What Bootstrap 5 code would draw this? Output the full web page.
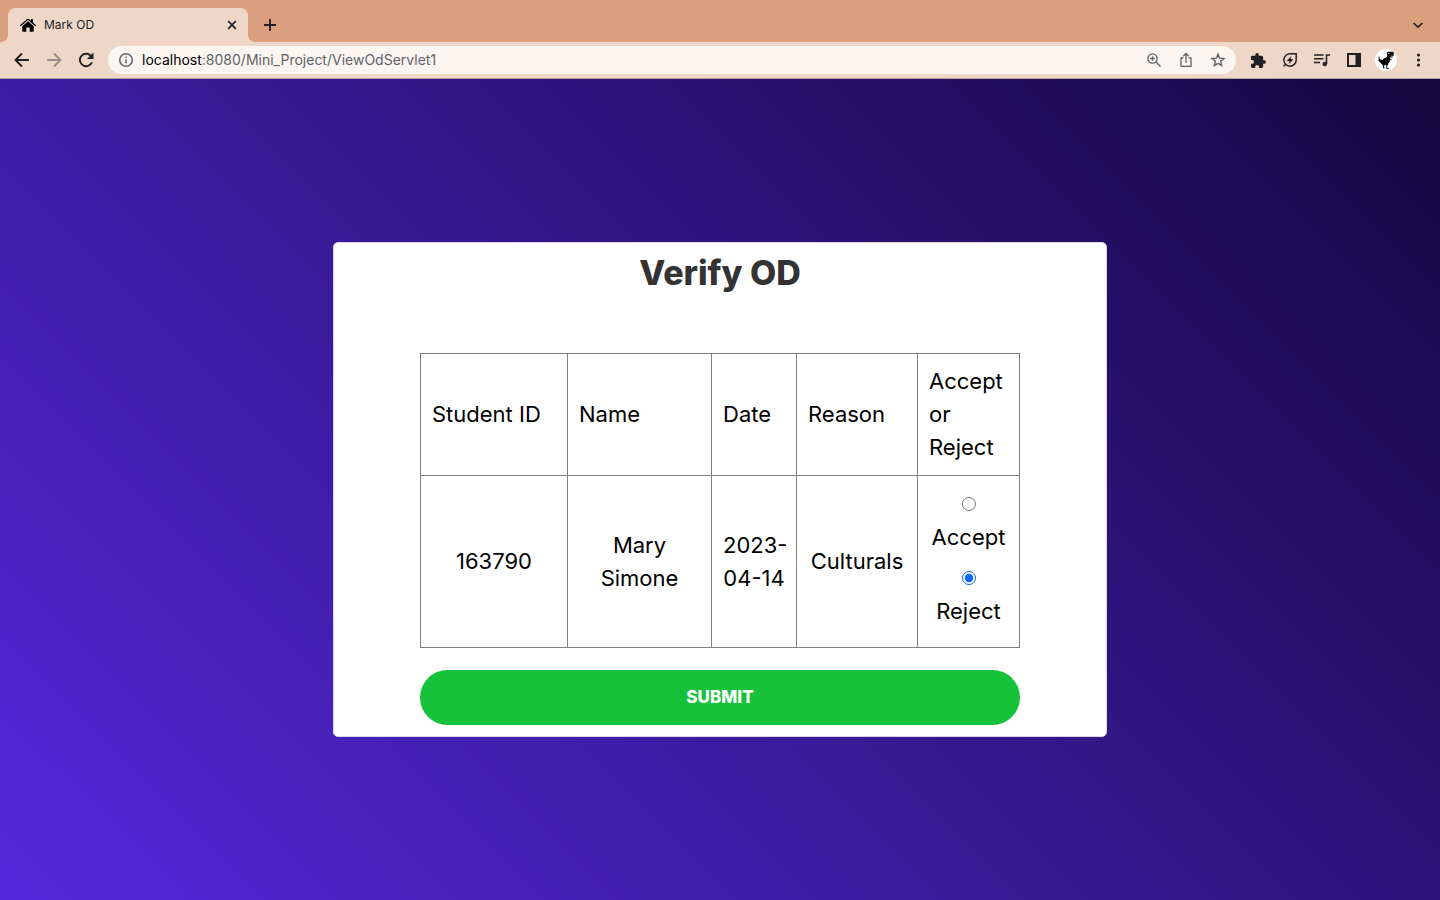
<!DOCTYPE html>
<html lang="en">
<head>
<meta charset="utf-8">
<meta name="viewport" content="width=device-width, initial-scale=1">
<title>Mark OD</title>
<link href="https://cdn.jsdelivr.net/npm/bootstrap@5.3.0/dist/css/bootstrap.min.css" rel="stylesheet">
<style>
  body { font-family: Inter, sans-serif; color: #000; }
  button.plain { border: 0; background: none; padding: 0; color: #202124; display: flex; align-items: center; justify-content: center; }
  svg { display: block; flex: none; }

  /* Browser frame */
  .tabstrip { background: #daa07d; height: 42px; padding: 8px 12px 0 8px; }
  .page-tab { position: relative; width: 240px; height: 34px; padding: 0 10px 0 12px; background: #efd7c8; border-radius: 8px 8px 0 0; font-size: 12px; color: #202124; }
  .page-tab::before, .page-tab::after { content: ""; position: absolute; bottom: 0; width: 8px; height: 8px; }
  .page-tab::before { left: -8px; background: radial-gradient(circle at 0 0, transparent 8px, #efd7c8 8px); }
  .page-tab::after { right: -8px; background: radial-gradient(circle at 100% 0, transparent 8px, #efd7c8 8px); }
  .toolbar { background: #efd7c8; height: 37px; padding: 4px 14px; border-bottom: 1px solid #b39f9b; gap: 16px; }
  .toolbar > .plain { width: 16px; }
  .omnibox { height: 28px; background: #fcf6f3; border-radius: 14px; padding: 0 10px; margin: 0 -2px; color: #5f6368; }
  .address { font-size: 14px; line-height: 20px; color: #5f6368; padding-bottom: 1px; }

  /* Page */
  .stage { background: linear-gradient(45deg, #5628dd, #13073f); }
  .panel { width: 54%; min-width: 640px; max-width: 774px; background: #fff; border: 1px solid #d9d5e4; border-radius: 5px; padding: 4px 24px 11px; }
  .panel-title { font-size: 34px; line-height: 52px; font-weight: 800; color: #333; margin-bottom: 54px; }
  .panel-form { max-width: 600px; }
  .od-table { table-layout: fixed; border-collapse: collapse; width: 100%; font-size: 22px; line-height: 33px; margin-bottom: 22px; }
  .od-table th, .od-table td { border: 1px solid #808080; padding: 11px; vertical-align: middle; font-weight: 400; }
  .od-table td { text-align: center; }
  .od-table th { height: 122px; }
  .od-table tbody tr { height: 172px; }
  .w-id { width: 147px; } .w-name { width: 144px; } .w-date { width: 85px; } .w-reason { width: 121px; }
  .choice { display: flex; flex-direction: column; align-items: center; margin-bottom: 8px; }
  .choice input { width: 14px; height: 14px; margin: 9px 0 10px; accent-color: #0668fe; }
  .submit-btn { height: 55px; border: 0; border-radius: 28px; background: #15c23a; color: #fff; font-size: 17px; font-weight: 800; }
</style>
</head>
<body>
<div class="min-vh-100 d-flex flex-column">
  <header>
    <div class="tabstrip d-flex align-items-center">
      <div class="page-tab d-flex align-items-center">
        <svg width="16" height="14" viewBox="0 0 16 14"><path d="M0 7.3 7.1 1Q8 .3 8.900 1L11 2.800V1h2v3.600l3 2.700-.8.9L8 2 .8 8.200z"/><path d="M2.300 8.200 8 3.300l5.700 4.900V13q0 .8-.8.8H9.700V9.500H6.300v4.300H3.100q-.8 0-.8-.8z"/></svg>
        <span class="ms-2 flex-grow-1">Mark OD</span>
        <button class="plain" aria-label="Close tab"><svg width="12" height="12" viewBox="0 0 12 12" stroke="currentColor" stroke-width="1.7"><path d="m2.200 2.200 7.600 7.600m0-7.600L2.200 9.800"/></svg></button>
      </div>
      <button class="plain ms-3" aria-label="New tab"><svg width="12" height="12" viewBox="0 0 12 12" stroke="currentColor" stroke-width="1.8"><path d="M6 0v12M0 6h12"/></svg></button>
      <button class="plain ms-auto me-1" aria-label="Search tabs"><svg width="12" height="12" viewBox="0 0 12 12" fill="none" stroke="currentColor" stroke-width="1.7"><path d="m1.500 4 4.500 4.200L10.500 4"/></svg></button>
    </div>
    <nav class="toolbar d-flex align-items-center" aria-label="Browser toolbar">
      <button class="plain" aria-label="Back"><svg width="16" height="20" viewBox="2 0 16 20" fill="none" stroke="currentColor" stroke-width="1.9"><path d="M17 10H4.500M10 3.500 3.500 10l6.500 6.500"/></svg></button>
      <button class="plain" aria-label="Forward"><svg width="16" height="20" viewBox="2 0 16 20" fill="none" stroke="#9b8d85" stroke-width="1.9"><path d="M3 10h12.500M10 3.500l6.500 6.500-6.500 6.500"/></svg></button>
      <button class="plain" aria-label="Reload"><svg width="16" height="16" viewBox="4 4 16 16" fill="currentColor"><path d="M17.200 6.800A7.200 7.200 0 1 0 18.950 14.200h-2.050A5.250 5.250 0 1 1 15.800 8.200L13 11h6.500V4.500z"/></svg></button>
      <div class="omnibox d-flex align-items-center flex-grow-1 gap-2">
        <svg width="16" height="16" viewBox="0 0 16 16" fill="none" stroke="currentColor" stroke-width="1.500"><circle cx="8" cy="8" r="6.300"/><path d="M8 7.200v4M8 4.400v1.600"/></svg>
        <a class="address flex-grow-1 text-decoration-none" href="#"><span class="text-black">localhost</span>:8080/Mini_Project/ViewOdServlet1</a>
        <div class="d-flex align-items-center gap-3">
          <svg width="16" height="16" viewBox="0 0 16 16" fill="none" stroke="currentColor" stroke-width="1.400"><circle cx="6.500" cy="6.500" r="4.600"/><path d="m10 10 4.500 4.500M6.500 4.200v4.600M4.200 6.500h4.600"/></svg>
          <svg width="16" height="16" viewBox="0 0 16 16" fill="none" stroke="currentColor" stroke-width="1.300"><path d="M5.500 6H3v8.400h10V6h-2.500M8 11V1.500M5.300 4.200 8 1.500l2.700 2.700"/></svg>
          <svg width="16" height="16" viewBox="0 0 16 16" fill="none" stroke="currentColor" stroke-width="1.400"><path d="m8 2.200 1.600 4 4.400.3-3.400 2.800 1.100 4.300L8 11.300l-3.700 2.300 1.100-4.300L2 6.500l4.400-.3z"/></svg>
        </div>
      </div>
      <button class="plain" aria-label="Extensions"><svg width="15" height="15" viewBox="2 1 21 21" fill="currentColor"><path d="M20.500 11H19V7c0-1.100-.9-2-2-2h-4V3.500a2.500 2.500 0 0 0-5 0V5H4a2 2 0 0 0-2 2v3.800h1.500a2.700 2.700 0 0 1 0 5.400H2V20c0 1.100.9 2 2 2h3.800v-1.500a2.700 2.700 0 0 1 5.400 0V22H17c1.100 0 2-.9 2-2v-4h1.500a2.500 2.500 0 0 0 0-5z"/></svg></button>
      <button class="plain" aria-label="Energy saver"><svg width="16" height="16" viewBox="0 0 16 16" fill="none" stroke="currentColor" stroke-width="1.500"><path d="M14.200 1.800H8.200A6.200 6.200 0 1 0 14.200 8zM3.700 12.300 1.500 14.300"/><path d="M9.400 3.900 4.800 8.700l2.700.5-.9 3 4.800-4.700-2.800-.6z" fill="currentColor" stroke="none"/></svg></button>
      <button class="plain" aria-label="Media control"><svg width="16" height="14" viewBox="0 0 16 14" fill="none" stroke="currentColor" stroke-width="1.500"><path d="M0 2h9.500M0 5.800h9.500M0 9.500h6M12.500 11V2H16"/><circle cx="10.800" cy="11" r="1.900" fill="currentColor" stroke-width=".8"/></svg></button>
      <button class="plain" aria-label="Side panel"><svg width="16" height="16" viewBox="0 0 16 16"><path d="M1 1h14v14H1z" fill="currentColor"/><path d="M3 3h6.500v10H3z" fill="#efd7c8"/></svg></button>
      <button class="plain" aria-label="Profile"><svg width="22" height="22" viewBox="0 0 22 22"><circle cx="11" cy="11" r="11" fill="#fff"/><path fill="#000" d="M12 3.500l.8-.8h5l.9.8v3.300h-3.200v.8h2.200v.8h-2.900v1.400h1.600v1.600h-.8v-.8h-.8v2l-1.700 2.100v1l-.8.800v2.500h1.300v.9h-2.200v-3.400l-1-.9-1.600 1.600v1.200h1v.9H7.900v-3.100L6.700 15l-1.500-1.600-1.600-1.700V7.600h.8v1.700l1.500 1.500 1.600.1 1.600-1.600 2-.8.9-.8z"/><path fill="#fff" d="M13.200 4h1v1h-1z"/></svg></button>
      <button class="plain" aria-label="Menu"><svg width="16" height="16" viewBox="2 0 16 16" fill="currentColor"><circle cx="10.500" cy="3" r="1.600"/><circle cx="10.500" cy="8" r="1.600"/><circle cx="10.500" cy="13" r="1.600"/></svg></button>
    </nav>
  </header>

  <main class="stage flex-grow-1 d-flex align-items-center justify-content-center">
    <section class="panel">
      <h1 class="panel-title text-center">Verify OD</h1>
      <form class="panel-form mx-auto">
        <table class="od-table">
          <thead>
            <tr>
              <th class="w-id" scope="col">Student ID</th>
              <th class="w-name" scope="col">Name</th>
              <th class="w-date" scope="col">Date</th>
              <th class="w-reason" scope="col">Reason</th>
              <th scope="col">Accept or Reject</th>
            </tr>
          </thead>
          <tbody>
            <tr>
              <td>163790</td>
              <td>Mary<br>Simone</td>
              <td>2023-<br>04-14</td>
              <td>Culturals</td>
              <td>
                <label class="choice"><input type="radio" name="status" value="accept">Accept</label>
                <label class="choice"><input type="radio" name="status" value="reject" checked>Reject</label>
              </td>
            </tr>
          </tbody>
        </table>
        <button type="submit" class="submit-btn d-block w-100">SUBMIT</button>
      </form>
    </section>
  </main>
</div>
<script src="https://cdn.jsdelivr.net/npm/bootstrap@5.3.0/dist/js/bootstrap.bundle.min.js"></script>
</body>
</html>
